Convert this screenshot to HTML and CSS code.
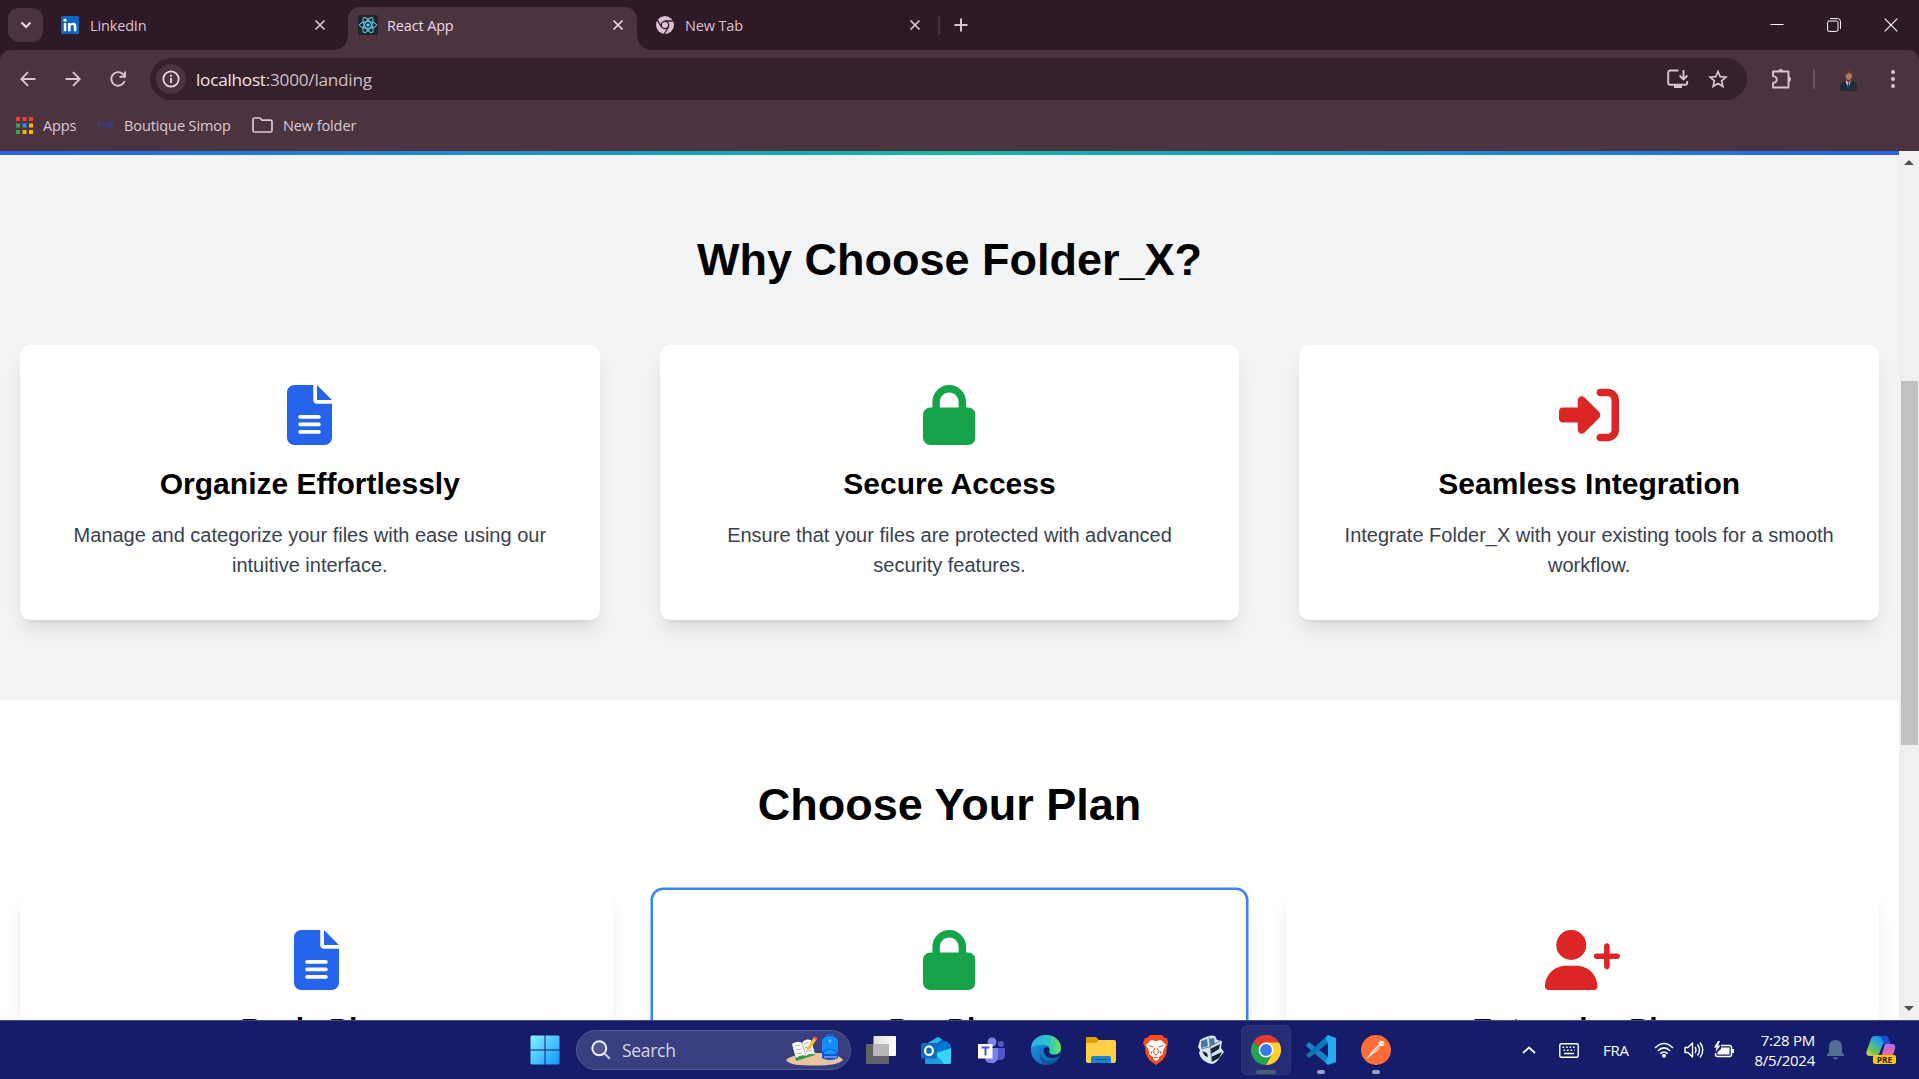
FILE: index.html
```html
<!DOCTYPE html>
<html lang="en">
<head>
<meta charset="utf-8">
<title>React App</title>
<link rel="stylesheet" href="styles.css">
</head>
<body>
<svg width="0" height="0" class="defs" aria-hidden="true">
  <symbol id="x" viewBox="0 0 12 12"><path d="M1.5 1.5l9 9M10.5 1.5l-9 9" fill="none" stroke="currentColor" stroke-width="1.7"/></symbol>
  <symbol id="file" viewBox="0 0 384 512"><path fill="currentColor" fill-rule="evenodd" d="M64 0C28.7 0 0 28.7 0 64V448c0 35.3 28.7 64 64 64H320c35.3 0 64-28.7 64-64V160H256c-17.7 0-32-14.3-32-32V0H64zM256 0V128H384L256 0zM112 256H272c8.8 0 16 7.2 16 16s-7.2 16-16 16H112c-8.8 0-16-7.2-16-16s7.2-16 16-16zm0 64H272c8.8 0 16 7.2 16 16s-7.2 16-16 16H112c-8.8 0-16-7.2-16-16s7.2-16 16-16zm0 64H272c8.8 0 16 7.2 16 16s-7.2 16-16 16H112c-8.8 0-16-7.2-16-16s7.2-16 16-16z"/></symbol>
  <symbol id="lock" viewBox="0 0 448 512"><path fill="currentColor" fill-rule="evenodd" d="M144 144v48H304V144c0-44.2-35.8-80-80-80s-80 35.8-80 80zM80 192V144C80 64.5 144.5 0 224 0s144 64.5 144 144v48h16c35.3 0 64 28.7 64 64V448c0 35.3-28.7 64-64 64H64c-35.3 0-64-28.7-64-64V256c0-35.3 28.7-64 64-64H80z"/></symbol>
</svg>

<div class="browser">
  <header class="tabstrip">
    <button class="tab-search"><svg width="12" height="8" viewBox="0 0 12 8"><path d="M1.5 1.5L6 6l4.5-4.5" fill="none" stroke="#eddbe6" stroke-width="2"/></svg></button>
    <div class="tab">
      <svg class="favicon" width="18" height="18" viewBox="0 0 18 18"><rect width="18" height="18" rx="1" fill="#0a66c2"/><rect x="2.8" y="7" width="2.5" height="8.2" fill="#fff"/><circle cx="4" cy="4.2" r="1.6" fill="#fff"/><path d="M7 7h2.4v1.2c1.4-2.2 6-2 6 2.3v4.7h-2.6v-4.4c0-2.5-3.2-2.3-3.2 0v4.4H7z" fill="#fff"/></svg>
      <span class="tab-title">LinkedIn</span><svg class="close" width="12" height="12"><use href="#x"/></svg>
    </div>
    <div class="tab active">
      <svg class="favicon" width="20" height="20" viewBox="0 0 20 20"><rect width="20" height="20" rx="2" fill="#20232a"/><g fill="none" stroke="#61dafb" stroke-width="1"><ellipse cx="10" cy="10" rx="8.5" ry="3.3"/><ellipse cx="10" cy="10" rx="8.5" ry="3.3" transform="rotate(60 10 10)"/><ellipse cx="10" cy="10" rx="8.5" ry="3.3" transform="rotate(120 10 10)"/></g><circle cx="10" cy="10" r="1.6" fill="#61dafb"/></svg>
      <span class="tab-title">React App</span><svg class="close" width="12" height="12"><use href="#x"/></svg>
    </div>
    <div class="tab">
      <svg class="favicon" width="18" height="18" viewBox="0 0 18 18"><circle cx="9" cy="9" r="9" fill="#dfbfd2"/><circle cx="9" cy="9" r="3.7" fill="none" stroke="#2e1a26" stroke-width="1.3"/><path d="M9 5h8.3M5.5 11L1.3 3.9M12.5 11l-4.2 7" stroke="#2e1a26" stroke-width="1.3"/></svg>
      <span class="tab-title">New Tab</span><svg class="close" width="12" height="12"><use href="#x"/></svg>
    </div>
    <span class="tab-divider"></span>
    <svg class="new-tab" width="14" height="14" viewBox="0 0 14 14"><path d="M7 .5v13M.5 7h13" stroke="#dfbfd2" stroke-width="2"/></svg>
    <div class="window-buttons">
      <svg width="14" height="14" viewBox="0 0 14 14"><path d="M.5 6.5h13" stroke="#fff"/></svg>
      <svg width="14" height="14" viewBox="0 0 14 14" fill="none" stroke="#fff"><rect x=".6" y="3" width="10.4" height="10.4" rx="1.5"/><path d="M3 .6h7.5a3 3 0 0 1 3 3V11"/></svg>
      <svg width="14" height="14" viewBox="0 0 14 14"><path d="M.7.7l12.6 12.6M13.3.7L.7 13.3" stroke="#fff" stroke-width="1.1"/></svg>
    </div>
  </header>

  <div class="toolbar">
    <nav class="nav-buttons">
      <svg width="16" height="16" viewBox="0 0 16 16"><path d="M15.5 8H1.5M8 1.2L1.3 8 8 14.8"/></svg>
      <svg width="16" height="16" viewBox="0 0 16 16"><path d="M.5 8h14M8 1.2L14.7 8 8 14.8"/></svg>
      <svg width="16" height="16" viewBox="0 0 16 16"><path d="M14.6 10A6.8 6.8 0 1 1 13 3.2L14.5 5M15 .5v5.3H9.5"/></svg>
    </nav>
    <div class="omnibox">
      <span class="site-info"><svg width="18" height="18" viewBox="0 0 18 18"><circle cx="9" cy="9" r="7.7" fill="none" stroke="#eddbe6" stroke-width="1.7"/><path d="M9 8v5M9 4.8v1.9" stroke="#eddbe6" stroke-width="1.8"/></svg></span>
      <span class="url">localhost<span class="url-path">:3000/landing</span></span>
      <svg class="install" width="22" height="20" viewBox="0 0 22 20" fill="none" stroke="#d5c3ce" stroke-width="1.9"><path d="M11.5 1.5H3.2a2 2 0 0 0-2 2v10.2a2 2 0 0 0 2 2h15a2 2 0 0 0 2-2V12M16.500 1v9M12.6 6.500l3.900 3.900 3.900-3.900"/><path d="M7 17.5h8" stroke-width="3"/></svg>
      <svg class="star" width="20" height="20" viewBox="0 0 20 20"><path d="M10 2.500l2.200 5.200 5.700.5-4.300 3.700 1.300 5.600L10 14.600l-4.900 2.900 1.300-5.600-4.300-3.700 5.700-.5z" fill="none" stroke="#d5c3ce" stroke-width="1.7"/></svg>
    </div>
    <svg class="puzzle" width="22" height="22" viewBox="0 0 22 22"><path d="M2 3.500h15.500v16H2v-4.600c5-.5 5-6.300 0-6.800z" fill="none" stroke="#dfbfd2" stroke-width="1.9" stroke-linejoin="round"/><path d="M7 3a2.800 2.800 0 0 1 5.400 0zM18 8.600a2.800 2.800 0 0 1 0 5.400z" fill="#dfbfd2"/></svg>
    <span class="toolbar-divider"></span>
    <svg class="avatar" width="18" height="21" viewBox="0 0 18 21"><path d="M0 21v-4c0-3 2-4.500 5-6h6c4 .5 6 2 6 5l1 1-2 4z" fill="#202c35"/><path d="M5.500 11L8 18l3-7z" fill="#d8dbe5"/><path d="M8 12l-.8 5 1 3.500 1-3.500L9 12z" fill="#243f7d"/><ellipse cx="8.800" cy="5.300" rx="3.200" ry="4.800" fill="#b57a5c"/><path d="M5.500 5c-.5-6 6-6 6.500-.5L9 2.500z" fill="#532f22"/><path d="M7 9l2 2.200L11 9v2.500L8.500 13 6.500 11z" fill="#82503d"/></svg>
    <svg class="menu" width="4" height="18" viewBox="0 0 4 18" fill="#dfbfd2"><circle cx="2" cy="2" r="2"/><circle cx="2" cy="9" r="2"/><circle cx="2" cy="16" r="2"/></svg>
  </div>

  <div class="bookmarks">
    <div class="bookmark apps"><svg width="17" height="17" viewBox="0 0 17 17"><path d="M0 0h4v4H0zM6.500 0h4v4h-4zM13 0h4v4h-4z" fill="#ea4335"/><path d="M0 6.500h4v4H0zM0 13h4v4H0z" fill="#34a853"/><path d="M6.500 6.500h4v4h-4z" fill="#2196f3"/><path d="M13 6.500h4v4h-4zM6.500 13h4v4h-4zM13 13h4v4h-4z" fill="#fbb305"/></svg><span>Apps</span></div>
    <div class="bookmark shop"><svg width="17" height="14" viewBox="0 0 17 14" fill="none" stroke="#35418b" stroke-width="1.2"><path d="M3.500 3.500L1 5l2 2-2 2M5 5v4M7 9V5l1.500 2L10 5v4"/><ellipse cx="11.500" cy="7" rx="1.600" ry="2.500"/><path d="M14 11V4q2.500 0 2 3l-2 2"/></svg><span>Boutique Simop</span></div>
    <div class="bookmark"><svg width="21" height="16" viewBox="0 0 21 16"><path d="M1 13.500v-11A1.500 1.500 0 0 1 2.500 1H8l2 2.200h8.500A1.500 1.500 0 0 1 20 4.700v8.800a1.500 1.500 0 0 1-1.500 1.500h-16A1.500 1.500 0 0 1 1 13.500z" fill="none" stroke="#ddc8d5" stroke-width="1.7"/></svg><span>New folder</span></div>
  </div>

  <div class="viewport">
    <main class="page">
      <div class="nav-edge"></div>
      <section class="section features">
        <h2>Why Choose Folder_X?</h2>
        <div class="grid feature-grid">
          <article class="card"><svg class="icon blue" width="45" height="60"><use href="#file"/></svg><h3>Organize Effortlessly</h3><p>Manage and categorize your files with ease using our intuitive interface.</p></article>
          <article class="card"><svg class="icon green" width="52.5" height="60"><use href="#lock"/></svg><h3>Secure Access</h3><p>Ensure that your files are protected with advanced security features.</p></article>
          <article class="card"><svg class="icon red" width="60" height="60" viewBox="0 0 512 512"><path fill="currentColor" d="M217.900 105.900L340.700 228.700c7.200 7.200 11.300 17.100 11.300 27.300s-4.100 20.100-11.300 27.300L217.900 406.100c-6.400 6.400-15 9.900-24 9.900c-18.700 0-33.900-15.200-33.900-33.900l0-62.100L32 320c-17.700 0-32-14.300-32-32l0-64c0-17.700 14.300-32 32-32l128 0 0-62.100c0-18.700 15.200-33.900 33.900-33.900c9 0 17.600 3.600 24 9.900zM352 416l64 0c17.700 0 32-14.300 32-32l0-256c0-17.700-14.300-32-32-32l-64 0c-17.700 0-32-14.300-32-32s14.300-32 32-32l64 0c53 0 96 43 96 96l0 256c0 53-43 96-96 96l-64 0c-17.700 0-32-14.300-32-32s14.300-32 32-32z"/></svg><h3>Seamless Integration</h3><p>Integrate Folder_X with your existing tools for a smooth workflow.</p></article>
        </div>
      </section>
      <section class="section plans">
        <h2>Choose Your Plan</h2>
        <div class="grid plan-grid">
          <article class="card"><svg class="icon blue" width="45" height="60"><use href="#file"/></svg><h3>Basic Plan</h3></article>
          <article class="card selected"><svg class="icon green" width="52.5" height="60"><use href="#lock"/></svg><h3>Pro Plan</h3></article>
          <article class="card"><svg class="icon red" width="75" height="60" viewBox="0 0 640 512"><path fill="currentColor" d="M96 128a128 128 0 1 1 256 0A128 128 0 1 1 96 128zM0 482.300C0 383.800 79.800 304 178.300 304h91.400C368.200 304 448 383.800 448 482.300c0 16.400-13.300 29.700-29.700 29.700H29.700C13.300 512 0 498.700 0 482.300zM504 312V248H440c-13.300 0-24-10.700-24-24s10.700-24 24-24h64V136c0-13.300 10.700-24 24-24s24 10.700 24 24v64h64c13.300 0 24 10.700 24 24s-10.700 24-24 24H552v64c0 13.300-10.700 24-24 24s-24-10.700-24-24z"/></svg><h3>Enterprise Plan</h3></article>
        </div>
      </section>
    </main>
    <aside class="scrollbar">
      <svg width="10" height="5" viewBox="0 0 10 5"><path d="M0 5l5-5 5 5z" fill="#505050"/></svg>
      <div class="track"><div class="thumb"></div></div>
      <svg width="10" height="5" viewBox="0 0 10 5"><path d="M0 0l5 5 5-5z" fill="#505050"/></svg>
    </aside>
  </div>
</div>

<footer class="taskbar">
  <div class="launch">
    <svg width="30" height="30" viewBox="0 0 30 30"><defs><linearGradient id="win" gradientUnits="userSpaceOnUse" x1="0" y1="0" x2="30" y2="30"><stop stop-color="#8cf4ff"/><stop offset="1" stop-color="#0796ff"/></linearGradient></defs><path d="M1.500.5H14.500v14H.5v-13zM15.500.5h13l1 1v13h-14zM.5 15.500h14v14h-13l-1-1zM15.500 15.500h14v13l-1 1h-13z" fill="url(#win)"/></svg>
    <div class="search">
      <svg width="20" height="20" viewBox="0 0 20 20"><circle cx="8.300" cy="8.300" r="7" fill="#ffffff22" stroke="#eceef8" stroke-width="2"/><path d="M13.500 13.500l5.300 5.300" stroke="#c9cbe0" stroke-width="2.200"/></svg>
      <span>Search</span>
      <svg class="search-art" width="58" height="32" viewBox="0 0 58 32"><path d="M0 26c4-4 16-7 29-7s25 2 28 7c-4 4-12 5.500-28 5.500S4 31 0 26z" fill="#eac49c"/><path d="M7 13l18-7 4 15-19 6z" fill="#2f9d4c"/><path d="M6 10q6-4 10-1 3-5 9-3l4 14q-6-1-9 2-5-2-10 2z" fill="#fff"/><path d="M16 9l4 13M9 12l5-1M10 16l5-1M11 20l5-1M18 10l5-2M19 14l6-2M20 18l6-2" stroke="#939ab0" stroke-width=".8"/><path d="M21 14l7-11 3 2-7 10-4 2z" fill="#ffbb28"/><path d="M27 4l1.500-2 3 2L30 6z" fill="#f25349"/><path d="M40 2q4-4 8 0" fill="none" stroke="#0a6eea" stroke-width="1.5"/><path d="M36 24V9q0-7 8-7t8 7v15q-8 4-16 0z" fill="#138fff"/><path d="M36 18q8-7 16 0v6q-8 4-16 0z" fill="#0758d9"/><path d="M38 18q6-5 12 0v2H38z" fill="#1799ff"/><path d="M38 23h13" stroke="#a98dff" stroke-width="1.5"/><circle cx="44" cy="7" r="1.500" fill="#62c5ff"/></svg>
    </div>
  </div>
  <div class="apps-row">
    <div class="app"><svg width="30" height="30" viewBox="0 0 30 30"><defs><linearGradient id="tv"><stop stop-color="#ddd"/><stop offset="1" stop-color="#fff"/></linearGradient></defs><rect y="9" width="23" height="20" rx="1" fill="#62636a"/><rect x="7.500" y="1" width="22.500" height="20" rx="1" fill="url(#tv)"/><path d="M7.500 9H23v12H7.500z" fill="#b8b8bb"/></svg></div>
    <div class="app"><svg width="30" height="30" viewBox="0 0 30 30"><path d="M4 10L17 2l13 8v17q0 2-2 2H6q-2 0-2-2z" fill="#0d65bd"/><path d="M5 9l12-7 4 2.500L9 13z" fill="#31b4ee"/><path d="M10 14L25 6l5 4-14 10z" fill="#0078d4"/><path d="M4 22l26-9v14q0 2-2 2H6q-2 0-2-2z" fill="#36d4fb"/><path d="M4 20l13 2 6 7H6q-2 0-2-3z" fill="#199bdd"/><rect y="8" width="16" height="15.500" rx="1.500" fill="#0f6cbd"/><ellipse cx="8" cy="15.700" rx="3.900" ry="4.300" fill="none" stroke="#fff" stroke-width="2.300"/></svg></div>
    <div class="app"><svg width="28" height="28" viewBox="0 0 28 28"><circle cx="15" cy="6" r="4.500" fill="#7b83eb"/><circle cx="24" cy="8" r="3" fill="#5059c9"/><path d="M19 12h9v7q0 5-5 5h-4z" fill="#5059c9"/><path d="M8 12h13v9q-1 7-7 6-6 0-6-6z" fill="#7b83eb"/><rect x="1" y="8" width="14.500" height="14.500" fill="#fff"/><path d="M4.500 11.500h8M8.500 11.500v8" stroke="#5059c9" stroke-width="2"/></svg></div>
    <div class="app"><svg width="30" height="30" viewBox="0 0 30 30"><defs><linearGradient id="e1"><stop stop-color="#2dafe8"/><stop offset=".6" stop-color="#2cc4c8"/><stop offset="1" stop-color="#71e64c"/></linearGradient><linearGradient id="e2" x1="0" y1="0" x2="1" y2="1"><stop stop-color="#1b9de8"/><stop offset="1" stop-color="#0759a7"/></linearGradient></defs><circle cx="15" cy="15" r="15" fill="url(#e2)"/><path d="M0 14C0 5 7 0 15 0c9 0 15 6 15 13 0 6-8 9-12 5 2-3 1-8-5-8C7 10 1 10 0 14z" fill="url(#e1)"/><path d="M9 15q0 11 11 11 5 0 8-3-4 7-13 7Q7 26 9 15z" fill="#14539b"/><path d="M12.500 15c0 6 6 10 14 7l2-1 2-3-3 1c-5 2-10 0-9.500-3 2-5-5.500-5-5.500-1z" fill="#151d6b"/></svg></div>
    <div class="app"><svg width="30" height="28" viewBox="0 0 30 28"><path d="M0 2Q0 1 1 1h9l4 4v8H0z" fill="#dfa000"/><path d="M0 7h10l3-3h15q2 0 2 2v19q0 2-2 2H2q-2 0-2-2z" fill="#ffcf48"/><path d="M5 27v-5q0-2 2-2h16q2 0 2 2v5z" fill="#1686d1"/><path d="M8.500 23.500h13" stroke="#075794"/></svg></div>
    <div class="app"><svg width="26" height="30" viewBox="0 0 26 30"><path d="M7 0h12l3 3h2l1 5-1 4q0 11-7 15l-4 3-4-3Q2 23 2 12L0 8l2-5h2z" fill="#fb4a20"/><path d="M8 5l5 1 5-1 5 5-3 6 0 3-4 3v2l-3 2-3-2v-2l-4-3 0-3-3-6z" fill="#fff"/><path d="M5.500 10.500l5 1.500M20.500 10.500l-5 1.500M11.500 13l-1 5 2.500 2 2.500-2-1-5M9 16l-1 3M17 16l1 3M11 22.500h4" stroke="#fb4a20" stroke-width="1" fill="none"/></svg></div>
    <div class="app"><svg width="26" height="30" viewBox="0 0 26 30"><path d="M2 5Q12-1 17 1l2 4 5 1-1 7 3 4-4 5q-3 6-8 7Q3 27 1 18l1-3-2-3z" fill="#d8e6ed"/><path d="M3 6l6-2 1 7-7 2zM11 4l5-1 1 7-5 1z" fill="#47799f"/><path d="M14 13l8-4-1 5-8 5-1-4z" fill="#15233a"/><path d="M13 22l11-5-3 6-7 4zM4 16l5 2 1 4-3-1z" fill="#111e30"/><path d="M3 14l8-2 11-6M11 2l3 24" stroke="#718596" fill="none"/></svg></div>
    <div class="app running current"><svg width="30" height="30" viewBox="0 0 30 30"><path d="M15 15L2 7.500A15 15 0 0 1 28 7.500z" fill="#e33b2e"/><path d="M15 15L2 7.500A15 15 0 0 0 15 30l6.500-11z" fill="#25a34a"/><path d="M15 15l6.500 3.500L15 30A15 15 0 0 0 28 7.500H15z" fill="#ffcf2e"/><circle cx="15" cy="15" r="7.500" fill="#fff"/><circle cx="15" cy="15" r="5.900" fill="#347de9"/></svg></div>
    <div class="app running"><svg width="30" height="30" viewBox="0 0 30 30"><path d="M22 0l8 3v24l-8 3z" fill="#27a9f2"/><path d="M1 9l2-2L22 22v8L0 11z" fill="#1681c6"/><path d="M22 0v8L3 23l-3-3z" fill="#0878bb"/><path d="M22 0l-3 3 3 5zM22 30l-3-3 3-5z" fill="#21a1e8"/></svg></div>
    <div class="app running"><svg width="30" height="30" viewBox="0 0 30 30"><circle cx="15" cy="15" r="15" fill="#ff6c37"/><circle cx="20.500" cy="8.500" r="2.800" fill="#fff"/><path d="M18.500 10.500l-6.500 8-6 5 5-7 7-7zM13 18l3-2 3-4" fill="#fff" stroke="#fff" stroke-width=".6"/><path d="M20 8.500h2.500M18 12l-6 5" stroke="#ff6c37" stroke-width=".8"/></svg></div>
  </div>
  <div class="tray">
    <svg class="chevron" width="14" height="8" viewBox="0 0 14 8"><path d="M1 7l6-5.500L13 7" fill="none" stroke="#fff" stroke-width="1.7"/></svg>
    <svg class="keyboard" width="20" height="15" viewBox="0 0 20 15"><rect x=".8" y=".8" width="18.400" height="13.400" rx="1.500" fill="none" stroke="#fff" stroke-width="1.4"/><path d="M3.500 4.300h13M4.500 7.200h11" stroke="#fff" stroke-width="1.5" stroke-dasharray="1.700 1.800"/><path d="M5 10.500h10" stroke="#fff" stroke-width="1.5"/></svg>
    <span class="lang">FRA</span>
    <svg class="wifi" width="20" height="16" viewBox="0 0 20 16" fill="none" stroke="#fff" stroke-width="1.5"><path d="M1 6q9-9 18 0M3.700 9q6.300-6.200 12.600 0M6.300 11.700q3.700-3.500 7.400 0"/><circle cx="10" cy="13.700" r="1.200" fill="#fff"/></svg>
    <svg class="sound" width="20" height="18" viewBox="0 0 20 18" fill="none" stroke="#fff" stroke-width="1.4" stroke-linejoin="round"><path d="M1 6.500h3L8.500 2v14L4 11.500H1zM11 6q2 3 0 6M13.500 3.500q4 5.500 0 11M16 1.500q5.500 7.500 0 15"/></svg>
    <svg class="battery" width="20" height="18" viewBox="0 0 20 18"><path d="M7 4.500h8.500q2 0 2 2v7q0 2-2 2H3.500q-2 0-2-2V12" fill="none" stroke="#fff" stroke-width="1.5"/><path d="M7 6.500h8.500v7H3.500V11L7 8zM18 8h2v4h-2zM4 0L0 6.500h2.500L1.500 11 6.500 4.500H4L6 0z" fill="#fff"/></svg>
    <div class="clock"><span>7:28 PM</span><span>8/5/2024</span></div>
    <svg class="bell" width="17" height="20" viewBox="0 0 17 20" fill="#516f94"><path d="M8.500 0q6.500 0 6.500 7v5l2 3v1H0v-1l2-3V7q0-7 6.500-7zM5.500 17.500h6q-1 2-3 2t-3-2z"/></svg>
    <div class="copilot"><svg width="30" height="28" viewBox="0 0 30 28"><defs><linearGradient id="c1" x1="1" y1="0" x2="0" y2="1"><stop stop-color="#1659e7"/><stop offset=".4" stop-color="#28a3de"/><stop offset=".75" stop-color="#70c653"/><stop offset="1" stop-color="#f9d729"/></linearGradient><linearGradient id="c2" x1="0" y1="0" x2="0" y2="1"><stop stop-color="#b566f8"/><stop offset="1" stop-color="#fd6b76"/></linearGradient></defs><path d="M9 0h10q3 0 4 4l1 4h-7L13 18q-1 2-3 2H4q-5 0-3-6L5 3q1-3 4-3z" fill="url(#c1)"/><path d="M18 0q4 0 5 4l1 4h-6l-2-5q0-2-3-3z" fill="#194ed5"/><path d="M19 8h7q4 0 3 5l-3 9H12q3-1 4-4z" fill="url(#c2)"/></svg><span>PRE</span></div>
  </div>
</footer>
</body>
</html>
```
FILE: styles.css
```css
* { box-sizing: border-box; }
body {
  margin: 0;
  height: 1079px;
  display: flex;
  flex-direction: column;
  overflow: hidden;
  font-family: "Open Sans", "Noto Sans", sans-serif;
  background: #fff;
}
svg { display: block; flex: none; }
.defs { position: absolute; }
.browser { height: 1020px; display: flex; flex-direction: column; background: #2e1a26; }

/* Tab strip */
.tabstrip { height: 50px; flex: none; display: flex; align-items: center; padding-left: 8px; color: #dfbfd2; }
.tab-search {
  width: 35px; height: 34px; margin-right: 7.5px; padding: 0; border: 0; border-radius: 11px;
  background: #4b3440; display: flex; align-items: center; justify-content: center;
}
.tab { width: 297.5px; height: 43px; align-self: flex-end; display: flex; align-items: center; padding: 0 22.5px 7px 10.5px; font-size: 14.5px; position: relative; }
.tab.active { width: 289px; margin-right: 8.5px; padding: 0 13.5px 7px 10px; background: #4b3440; color: #eddbe6; border-radius: 12px 12px 0 0; }
.tab.active::before, .tab.active::after {
  content: ""; position: absolute; bottom: 0; width: 14px; height: 14px;
}
.tab.active::before { left: -14px; background: radial-gradient(circle at 0 0, transparent 13.5px, #4b3440 14px); }
.tab.active::after { right: -14px; background: radial-gradient(circle at 100% 0, transparent 13.5px, #4b3440 14px); }
.tab-title { margin-left: 11px; flex: 1; letter-spacing: -.15px; }
.active .tab-title { margin-left: 9px; }
.tab-divider { width: 2px; height: 19px; background: #4b3440; margin-left: -5px; border-radius: 1px; }
.new-tab { margin-left: 13.5px; }
.window-buttons { margin-left: auto; display: flex; gap: 43px; padding-right: 21px; }

/* Toolbar */
.toolbar { height: 58px; flex: none; display: flex; align-items: center; background: #4b3440; border-radius: 10px 10px 0 0; padding-left: 20px; }
.nav-buttons { display: flex; gap: 29px; width: 130px; }
.nav-buttons svg { fill: none; stroke: #dfbfd2; stroke-width: 1.9; }
.omnibox { width: 1597px; height: 42px; border-radius: 21px; background: #35202b; display: flex; align-items: center; padding: 0 19px 0 6px; }
.site-info { width: 30px; height: 30px; border-radius: 50%; background: #4b3440; display: flex; align-items: center; justify-content: center; }
.url { margin-left: 10px; flex: 1; font-size: 17.2px; letter-spacing: -.25px; color: #f1e4ec; }
.url-path { color: #cdbfc8; }
.star { margin-left: 19px; }
.puzzle { margin-left: 24px; }
.toolbar-divider { width: 2px; height: 20px; margin-left: 20px; background: #6a525f; }
.avatar { margin: 3px 0 0 25px; }
.menu { margin-left: 33px; }

/* Bookmarks */
.bookmarks { height: 43px; flex: none; display: flex; padding: 0 16px 9px; background: #4b3440; color: #ddcad6; font-size: 14.5px; letter-spacing: -.1px; }
.bookmark { display: flex; align-items: center; gap: 10px; }
.apps { width: 81px; }
.shop { width: 155px; }

/* Page */
.viewport { flex: 1; min-height: 0; display: flex; font-family: "Liberation Sans", Arial, sans-serif; }
.page { flex: 1; overflow: hidden; background: #fff; }
.nav-edge { height: 4px; background: linear-gradient(to right, #2563eb, #14b8a6, #2563eb); }
.section { padding: 80px 20px; text-align: center; }
.features { background: #f3f4f6; }
.section h2 { margin: 0 0 60px; font-size: 45px; line-height: 50px; font-weight: 700; color: #000; }
.grid { display: grid; grid-template-columns: repeat(3, 1fr); }
.feature-grid { gap: 60px; }
.plan-grid { gap: 40px; }
.card { background: #fff; border-radius: 10px; padding: 40px; box-shadow: 0 12.5px 18.75px -3.75px rgba(0,0,0,.1), 0 5px 7.5px -5px rgba(0,0,0,.1); }
.plan-grid .card { height: 560px; }
.plan-grid .selected { box-shadow: 0 0 0 2.5px #3b82f6, 0 12.5px 18.75px -3.75px rgba(0,0,0,.1); }
.icon { margin: 0 auto 19px; }
.blue { color: #2563eb; }
.green { color: #16a34a; }
.red { color: #dc2626; }
.card h3 { margin: 0 0 16px; font-size: 30px; line-height: 40px; font-weight: 700; color: #000; }
.card p { margin: 0; font-size: 20px; line-height: 30px; color: #374151; }

.scrollbar { width: 20px; background: #f0f0f0; display: flex; flex-direction: column; align-items: center; padding: 9px 0; }
.track { flex: 1; width: 17px; }
.thumb { height: 364px; margin-top: 216px; background: #c1c1c1; }

/* Taskbar */
.taskbar { height: 59px; flex: none; display: flex; align-items: center; background: #151d6b; border-top: 1px solid #454b78; color: #fff; }
.launch { display: flex; align-items: center; padding-left: 529.5px; gap: 16.5px; }
.search { width: 275px; height: 40px; border: 1px solid #535a93; border-radius: 20px; background: #383e7e; display: flex; align-items: center; padding: 0 6px 0 14px; font-size: 17.5px; color: #d5d7e8; }
.search span { margin-left: 11px; flex: 1; letter-spacing: -.3px; }
.apps-row { display: flex; margin-left: 2.5px; }
.app { width: 55px; height: 50px; display: flex; align-items: center; justify-content: center; position: relative; }
.current { width: 50px; margin: 0 2.5px; border-radius: 6px; background: #262d75; border: 1px solid #31377c; }
.running::after { content: ""; position: absolute; bottom: 1px; left: calc(50% - 4px); width: 8px; height: 4px; border-radius: 2px; background: #9b9ebd; }
.current::after { left: calc(50% - 10px); bottom: 0; width: 20px; background: #40626f; }
.tray { margin-left: auto; display: flex; align-items: center; padding-right: 23px; }
.keyboard { margin-left: 23px; }
.lang { width: 26px; margin-left: 24px; font-size: 15px; letter-spacing: -.2px; }
.wifi { margin-left: 25px; }
.sound, .battery { margin-left: 10px; }
.clock { width: 81px; display: flex; flex-direction: column; align-items: flex-end; font-size: 15px; line-height: 20px; letter-spacing: -.25px; }
.bell { margin-left: 12px; }
.copilot { margin-left: 22px; position: relative; }
.copilot span { position: absolute; left: 7px; top: 19px; width: 23px; height: 9px; border-radius: 2px; background: #ffc60b; color: #2d2300; font-size: 8.5px; line-height: 9px; font-weight: 700; text-align: center; }
```
